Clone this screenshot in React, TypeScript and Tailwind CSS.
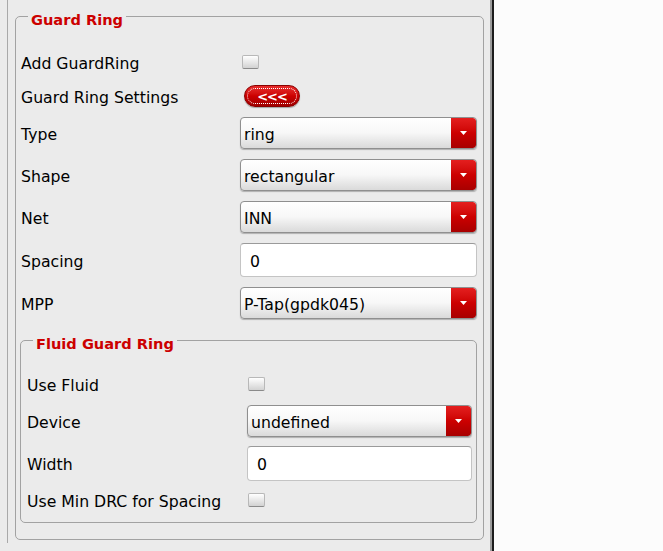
import type { ReactNode } from 'react';

function Checkbox({ inset = 'ml-[2px]' }: { inset?: string }) {
    return (
        <div className={`${inset} w-[17px] h-[14px] rounded-[2px] border border-[#b8b8b8] border-b-[#8a8a8a] bg-linear-to-b from-white to-[#d2d2d2]`} />
    );
}

function Select({ value }: { value: string }) {
    return (
        <div className="flex h-full w-full overflow-hidden rounded-[4px] border border-[#8f8f8f] bg-linear-to-b from-white via-[#f7f7f7] to-[#dadada] shadow-[0_1px_1px_rgba(0,0,0,0.25)]">
            <span className="flex flex-1 items-center pt-[3px] pl-[3px] text-[15.7px] text-black">{value}</span>
            <span className="flex w-[25px] items-center justify-center rounded-r-[3px] bg-linear-to-b from-[#e41e1e] via-[#cc0000] to-[#a80000]">
                <svg width="9" height="6" viewBox="0 0 9 6" className="-mt-[1px]">
                    <path d="M1 1h7L4.5 5z" fill="#ffffff" />
                </svg>
            </span>
        </div>
    );
}

function TextField({ value, pad = 'pl-[9px]' }: { value: string; pad?: string }) {
    return (
        <div className={`flex h-full w-full items-center rounded-[4px] border border-[#c4c4c4] border-t-[#9a9a9a] bg-white pt-[3px] ${pad} text-[15.7px] text-black`}>
            {value}
        </div>
    );
}

function Row({ label, height, gap, labelWidth, children }: { label: string; height: string; gap: string; labelWidth: string; children: ReactNode }) {
    return (
        <div className={`flex items-center ${height} ${gap}`}>
            <span className={`${labelWidth} shrink-0 pt-[3px] text-[15.7px] text-black whitespace-nowrap`}>{label}</span>
            <div className="flex h-full flex-1 items-center">{children}</div>
        </div>
    );
}

function GroupBox({ title, className, children }: { title: string; className: string; children: ReactNode }) {
    return (
        <div className={`relative rounded-[5px] border border-[#a2a2a2] ${className}`}>
            <span className="absolute top-[-6px] left-[12px] bg-[#ebebeb] px-[3px] text-[14.6px] leading-[18px] font-bold text-[#cc0000]">
                {title}
            </span>
            {children}
        </div>
    );
}

export default function App() {
    return (
        <div className="flex h-[551px] w-[663px] bg-[#fcfcfc] font-['DejaVu_Sans',sans-serif]">
            <div className="flex h-full w-[490px] bg-[#ebebeb] pl-[7px] pb-[8px]">
                <div className="flex-1 border-l border-[#a9a9a9] pt-[16px] pl-[7px] pr-[6px]">
                    <GroupBox title="Guard Ring" className="pt-[30px] pb-[16px] pl-[4px] pr-[6px]">
                        <div className="pl-[1px]">
                            <Row label="Add GuardRing" height="h-[30px]" gap="" labelWidth="w-[219px]">
                                <Checkbox />
                            </Row>
                            <Row label="Guard Ring Settings" height="h-[22px]" gap="mt-[8px]" labelWidth="w-[219px]">
                                <div className="ml-[4px] flex h-[22px] w-[56px] items-center justify-center rounded-full border border-[#8a0000] bg-linear-to-b from-[#e82a2a] via-[#cc0000] to-[#a00000] p-[2px] shadow-[0_1px_1px_rgba(0,0,0,0.3)]">
                                    <div className="flex h-full w-full items-center justify-center rounded-full border border-dotted border-white text-[13px] leading-none font-bold italic tracking-[-1px] text-white">
                                        &lt;&lt;&lt;
                                    </div>
                                </div>
                            </Row>
                            <Row label="Type" height="h-[32px]" gap="mt-[10px]" labelWidth="w-[219px]">
                                <Select value="ring" />
                            </Row>
                            <Row label="Shape" height="h-[32px]" gap="mt-[10px]" labelWidth="w-[219px]">
                                <Select value="rectangular" />
                            </Row>
                            <Row label="Net" height="h-[32px]" gap="mt-[10px]" labelWidth="w-[219px]">
                                <Select value="INN" />
                            </Row>
                            <Row label="Spacing" height="h-[34px]" gap="mt-[10px]" labelWidth="w-[219px]">
                                <TextField value="0" />
                            </Row>
                            <Row label="MPP" height="h-[32px]" gap="mt-[10px]" labelWidth="w-[219px]">
                                <Select value="P-Tap(gpdk045)" />
                            </Row>
                        </div>

                        {/* Fluid Guard Ring */}
                        <GroupBox title="Fluid Guard Ring" className="mt-[21px] pt-[33px] pb-[12px] pl-[6px] pr-[4px]">
                            <Row label="Use Fluid" height="h-[20px]" gap="" labelWidth="w-[220px]">
                                <Checkbox inset="ml-[1px]" />
                            </Row>
                            <Row label="Device" height="h-[32px]" gap="mt-[11px]" labelWidth="w-[220px]">
                                <Select value="undefined" />
                            </Row>
                            <Row label="Width" height="h-[35px]" gap="mt-[9px]" labelWidth="w-[220px]">
                                <TextField value="0" />
                            </Row>
                            <Row label="Use Min DRC for Spacing" height="h-[20px]" gap="mt-[9px]" labelWidth="w-[220px]">
                                <Checkbox inset="ml-[1px]" />
                            </Row>
                        </GroupBox>
                    </GroupBox>
                </div>
            </div>
            <div className="h-full w-[2px] bg-[#9c9c9c]" />
            <div className="h-full w-[2px] bg-[#1c1c1c]" />
        </div>
    );
}
